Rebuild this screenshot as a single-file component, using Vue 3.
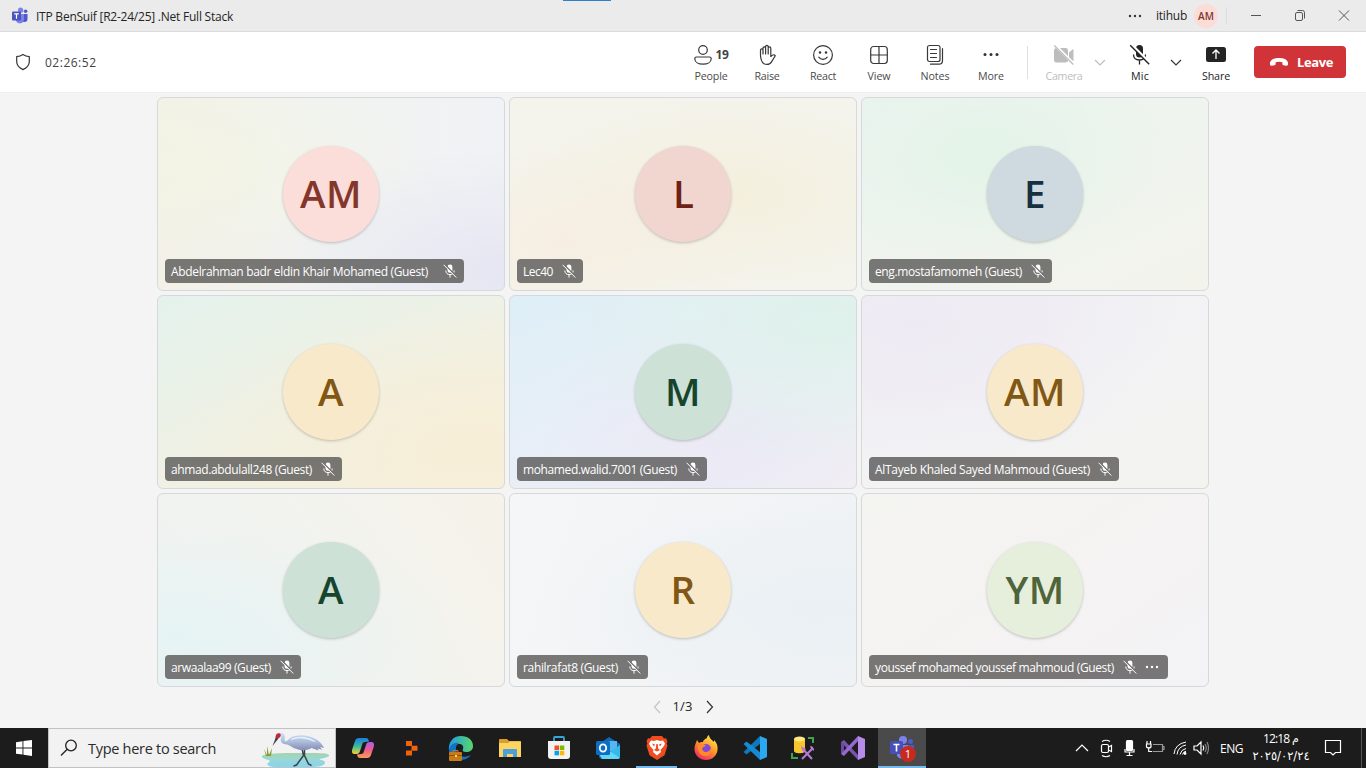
<script setup>
const vFit = {
  mounted(el, { value }) {
    const natural = el.getBoundingClientRect().width
    el.style.letterSpacing = (value - natural) / el.textContent.trim().length + 'px'
  },
}

const tiles = [
  { name: 'Abdelrahman badr eldin Khair Mohamed (Guest)', ini: 'AM', iw: 62, w: 257, pill: 299, cls: 't1' },
  { name: 'Lec40', ini: 'L', iw: 20, w: 30, pill: 66, cls: 't2' },
  { name: 'eng.mostafamomeh (Guest)', ini: 'E', iw: 22, w: 147, pill: 183, cls: 't3' },
  { name: 'ahmad.abdulall248 (Guest)', ini: 'A', iw: 26, w: 141, pill: 177, cls: 't4' },
  { name: 'mohamed.walid.7001 (Guest)', ini: 'M', iw: 36, w: 154, pill: 190, cls: 't5' },
  { name: 'AlTayeb Khaled Sayed Mahmoud (Guest)', ini: 'AM', iw: 62, w: 215, pill: 250, cls: 't6' },
  { name: 'arwaalaa99 (Guest)', ini: 'A', iw: 26, w: 100, pill: 136, cls: 't7' },
  { name: 'rahilrafat8 (Guest)', ini: 'R', iw: 25, w: 95, pill: 131, cls: 't8' },
  { name: 'youssef mohamed youssef mahmoud (Guest)', ini: 'YM', iw: 59, w: 239, pill: 299, cls: 't9', more: true },
]
</script>

<template>
  <div class="screen">
    <header class="titlebar">
      <svg class="logo" width="18" height="18" viewBox="0 0 18 18">
        <circle cx="14.6" cy="4.2" r="1.8" fill="#5059c9" /><circle cx="9.6" cy="3.2" r="2.6" fill="#7b83eb" />
        <path d="M12 7h4.5v5a3 3 0 0 1-3 3H12z" fill="#5059c9" /><path d="M5 7h8v5.5a4.2 4.2 0 0 1-8 1.5z" fill="#7b83eb" />
        <rect x="1" y="4.5" width="9" height="9" rx="1" fill="#4b53bc" /><path d="M3.2 6.8h4.6M5.5 6.8v5" stroke="#fff" stroke-width="1.2" />
      </svg>
      <span class="win-title"><span v-fit="197">ITP BenSuif [R2-24/25] .Net Full Stack</span></span>
      <div class="win-right">
        <svg class="tdots" width="14" height="4" viewBox="0 0 14 4"><circle cx="2" cy="2" r="1.2" /><circle cx="7" cy="2" r="1.2" /><circle cx="12" cy="2" r="1.2" /></svg>
        <span class="acct"><span v-fit="31">itihub</span></span>
        <span class="mini-av">AM</span>
        <i class="tsep"></i>
        <svg class="wbtns" width="110" height="16" viewBox="0 0 110 16" fill="none" stroke="#555">
          <path d="M5 7.5h10M93 2.5l10 10M103 2.5l-10 10" /><rect x="49.5" y="4.5" width="7" height="8" rx="1.5" /><path d="M51.5 2.5h5a2 2 0 0 1 2 2v6" />
        </svg>
      </div>
    </header>

    <div class="toolbar">
      <svg class="shield" width="18" height="18" viewBox="0 0 18 18" fill="none" stroke="#333" stroke-width="1.2" stroke-linejoin="round"><path d="M9 1.5c2 1.4 4 2 6.300 2.100v5c0 3.800-2.400 6.300-6.300 8-3.900-1.700-6.300-4.200-6.300-8v-5C5 3.500 7 2.900 9 1.500z" /></svg>
      <span class="timer"><span v-fit="51.5">02:26:52</span></span>
      <div class="tools">
        <div class="tool">
          <div class="ic people">
            <svg width="20" height="22" viewBox="0 0 20 22" class="ln"><circle cx="10" cy="6" r="4.3" /><path d="M3.500 13h13a1.700 1.700 0 0 1 1.700 1.700c0 3.500-3.700 5.500-8.200 5.500s-8.200-2-8.200-5.500A1.700 1.700 0 0 1 3.500 13z" /></svg>
            <b>19</b>
          </div><em><span v-fit="33">People</span></em>
        </div>
        <div class="tool">
          <div class="ic"><svg width="20" height="22" viewBox="0 0 20 22" class="ln"><path d="M3.500 11V6.200a1.200 1.200 0 0 1 2.500 0V4.200a1.300 1.300 0 0 1 2.600 0V2.700a1.300 1.300 0 0 1 2.600 0v1.500a1.300 1.300 0 0 1 2.600 0v8.300l1.800-1.400c.8-.6 2.200-.4 2.700.6l-3.800 6.200c-1 1.800-2.200 2.500-4.500 2.500-3.600 0-5-1.800-5.800-4.800-.4-1.600-.7-3-.7-4.600zM6 6v4M8.600 4.200V10M11.200 4.200V10" /></svg></div><em><span v-fit="25">Raise</span></em>
        </div>
        <div class="tool">
          <div class="ic"><svg width="22" height="22" viewBox="0 0 22 22" class="ln"><circle cx="11" cy="11" r="9.4" /><circle cx="8" cy="8.5" r="1.2" fill="#333" stroke="none" /><circle cx="14" cy="8.5" r="1.2" fill="#333" stroke="none" /><path d="M6.800 13.200c2 2.800 6.400 2.800 8.400 0" /></svg></div><em><span v-fit="26">React</span></em>
        </div>
        <div class="tool">
          <div class="ic"><svg width="20" height="22" viewBox="0 0 20 22" class="ln"><rect x="1.7" y="2.5" width="16.6" height="17" rx="3" /><path d="M10 2.500v17M1.700 11h16.600" /></svg></div><em><span v-fit="23">View</span></em>
        </div>
        <div class="tool">
          <div class="ic"><svg width="20" height="22" viewBox="0 0 20 22" class="ln"><rect x="2.5" y="1.5" width="12.5" height="16" rx="2" /><path d="M5.500 5.500h6M5.500 9.500h6M5.500 13.500h6M17.500 4.500v12c0 2.500-1 3.700-3.500 3.700H5.500" /></svg></div><em><span v-fit="29">Notes</span></em>
        </div>
        <div class="tool">
          <div class="ic"><svg width="20" height="22" viewBox="0 0 20 22" fill="#333"><circle cx="4" cy="10.5" r="1.5" /><circle cx="10" cy="10.5" r="1.5" /><circle cx="16" cy="10.5" r="1.5" /></svg></div><em><span v-fit="26">More</span></em>
        </div>
        <i class="vsep"></i>
        <div class="tool off">
          <div class="ic"><svg width="24" height="22" viewBox="0 0 24 22"><rect x="2" y="4" width="14" height="14.5" rx="2.5" fill="#bdbdbd" /><path d="M17 8.500l3.500-3c.6-.5 1-.2 1 .4v10.500c0 .7-.5.9-1 .4l-3.500-3z" fill="#bdbdbd" /><path d="M2.800 1l19 19" stroke="#fff" stroke-width="3" /><path d="M2.300 1.500l19 19" stroke="#bdbdbd" stroke-width="1.3" /></svg></div><em><span v-fit="37">Camera</span></em>
        </div>
        <svg class="chev off" width="16" height="10" viewBox="0 0 16 10"><path d="M3 2l5 5 5-5" /></svg>
        <div class="tool dark">
          <div class="ic"><svg width="22" height="22" viewBox="0 0 22 22"><rect x="7" y="1" width="7" height="12.5" rx="3.5" fill="#242424" /><path d="M4.500 10.500c0 3.500 2.500 5.500 6 5.500s6-2 6-5.500M10.500 16v4.500" fill="none" stroke="#242424" stroke-width="1.3" /><path d="M2.500.5l19 19" stroke="#fff" stroke-width="2.6" /><path d="M1.200 1.200l19 19" stroke="#242424" stroke-width="1.4" /></svg></div><em><span v-fit="18">Mic</span></em>
        </div>
        <svg class="chev" width="16" height="10" viewBox="0 0 16 10"><path d="M3 2l5 5 5-5" /></svg>
        <div class="tool dark">
          <div class="ic"><svg width="22" height="22" viewBox="0 0 22 22"><rect x="1" y="3" width="20" height="15" rx="2.5" fill="#242424" /><path d="M11 15v-9M7.500 9.500L11 6 14.500 9.500" fill="none" stroke="#fff" stroke-width="1.3" /></svg></div><em><span v-fit="28">Share</span></em>
        </div>
        <button class="leave">
          <svg width="20" height="10" viewBox="0 0 20 10"><path d="M10 1c4.500 0 7.700 1.600 8.700 3.700.5 1 .5 2.300.1 3.300-.2.6-.8.9-1.400.8l-3-.5c-.6-.1-1-.6-1-1.200V5.300C12.400 4.900 11.200 4.700 10 4.700s-2.400.2-3.400.6v1.800c0 .6-.4 1.100-1 1.200l-3 .5c-.6.1-1.200-.2-1.400-.8-.4-1-.4-2.300.1-3.300C2.300 2.600 5.500 1 10 1z" fill="#fff" /></svg>
          <span v-fit="36">Leave</span>
        </button>
      </div>
    </div>

    <main class="stage">
      <div class="grid">
        <section v-for="t in tiles" :key="t.name" class="tile" :class="t.cls">
          <div class="avatar"><span v-fit="t.iw">{{ t.ini }}</span></div>
          <div class="pill" :style="{ width: t.pill + 'px' }">
            <span class="name"><span v-fit="t.w">{{ t.name }}</span></span>
            <svg class="mute" width="14" height="14" viewBox="0 0 14 14"><rect x="4.6" y=".5" width="4.8" height="8.3" rx="2.4" fill="#fff" /><path d="M2.800 6.500c0 2.700 1.700 4.100 4.200 4.100s4.200-1.400 4.200-4.100M7 10.600v3" fill="none" stroke="#fff" /><path d="M1.500.3L14 12.800" stroke="#777674" stroke-width="1.5" /><path d="M.6.8l12.700 12.700" stroke="#fff" /></svg>
            <svg v-if="t.more" class="pdots" width="14" height="4" viewBox="0 0 14 4" fill="#fff"><circle cx="2" cy="2" r="1.2" /><circle cx="7" cy="2" r="1.2" /><circle cx="12" cy="2" r="1.2" /></svg>
          </div>
        </section>
      </div>
      <nav class="pager">
        <svg class="off" width="8" height="14" viewBox="0 0 8 14"><path d="M7 1L1.500 7 7 13" /></svg>
        <span class="pg"><span v-fit="20">1/3</span></span>
        <svg width="8" height="14" viewBox="0 0 8 14"><path d="M1 1l5.500 6L1 13" /></svg>
      </nav>
    </main>

    <footer class="taskbar">
      <div class="start"><svg width="16" height="16" viewBox="0 0 16 16" fill="#fff"><path d="M0 2.300L6.500 1.300V7.500H0zM7.400 1.100L16 0v7.500H7.400zM0 8.400h6.500v6.200L0 13.700zM7.400 8.400H16V16l-8.600-1.200z" /></svg></div>
      <div class="search">
        <svg class="mag" width="18" height="18" viewBox="0 0 18 18" fill="none" stroke="#222" stroke-width="1.3"><circle cx="11" cy="6.5" r="5.3" /><path d="M7.200 10.300L1 16.500" /></svg>
        <span class="ph"><span v-fit="128">Type here to search</span></span>
        <svg class="crane" width="70" height="36" viewBox="0 0 70 36">
          <defs><linearGradient id="lake" x1="0" y1="0" x2="0" y2="1"><stop offset="0" stop-color="#a5d2ad" /><stop offset=".4" stop-color="#9ad7d2" /><stop offset="1" stop-color="#87d5ef" /></linearGradient><linearGradient id="bird" x1="0" y1="0" x2="0" y2="1"><stop offset="0" stop-color="#d3e3f6" /><stop offset=".5" stop-color="#adbddb" /><stop offset="1" stop-color="#8189b2" /></linearGradient></defs>
          <path d="M2 25c2-2 12-3 31-3s35-.5 36 2-7 3-9 4 6 1 5 4-7 4-14 4H16c-7 0-10-2-8-4s3-2 0-3-7-2-6-4z" fill="url(#lake)" />
          <path d="M6 25l-2-7 3 6 0-9 2 9 3-7-1 8z" fill="#8c9c35" />
          <path d="M42 17.500l1.500 7L36.500 34l-3 1M44.500 17.500v7L48.500 33l3 1.500" fill="none" stroke="#34454f" stroke-width="1.5" />
          <path d="M18.500 2.500c2-1.300 5-.8 6 1.500 1 2.300-.2 4.500.6 6.200 1.400.6 3-1.700 5-3.200 5-3.600 14-3.300 20-1.300 6.500 1.600 11.500 6 14 11.300l-4-1 2 2.800-4.500-1.300 1 2-7-2.500c-5 2.500-11 3-15.600.8-4.500-1.600-7-4.300-10.500-4.600-4.500-.3-5.500-3.400-4.500-7.200-1-1-1.500-2-2.500-3.500z" fill="url(#bird)" />
          <path d="M15.500 6c.3-3 2-4.500 4.500-3.500 1 1 1 2.600-.2 3.800L16 9.500z" fill="#c32939" /><path d="M15.800 6.500l2.400 1.300L12.500 15z" fill="#39434c" />
          <path d="M31 8.500c7-3 17-2.300 24 2" fill="none" stroke="#e9f2fd" stroke-width="1.3" />
        </svg>
      </div>
      <div class="apps">
        <div class="app"><svg width="24" height="24" viewBox="0 0 24 24">
          <defs><linearGradient id="cpa" x1="0" y1="0" x2="0" y2="1"><stop offset="0" stop-color="#1a7fe0" /><stop offset=".5" stop-color="#36b7a0" /><stop offset="1" stop-color="#f2d22d" /></linearGradient><linearGradient id="cpb" x1="0" y1="0" x2="0" y2="1"><stop offset="0" stop-color="#b05be8" /><stop offset=".5" stop-color="#ee5b8d" /><stop offset="1" stop-color="#f8a052" /></linearGradient></defs>
          <path d="M8 2h7c2 0 2.500 1.500 3 3.500l-4 .5c-2 0-2.500 1-3 3l-2 6c-.5 2-1.500 3-3.500 3H4c-3 0-3.500-2-2.700-5L4 5c.6-2 2-3 4-3z" fill="url(#cpa)" />
          <path d="M16 22H9c-2 0-2.500-1.500-3-3.500l4-.5c2 0 2.500-1 3-3l2-6c.5-2 1.500-3 3.500-3H20c3 0 3.500 2 2.700 5L20 19c-.6 2-2 3-4 3z" fill="url(#cpb)" /></svg></div>
        <div class="app"><svg width="20" height="20" viewBox="0 0 20 20"><path d="M1 1h17v18H1z" fill="#1b1c25" /><path d="M4 3h6v5H4zM9.500 7.700h6v5h-6zM4 12.500h6v5H4z" fill="#f26207" /></svg></div>
        <div class="app"><svg width="26" height="26" viewBox="0 0 26 26">
          <defs><linearGradient id="edg"><stop offset="0" stop-color="#219be0" /><stop offset="1" stop-color="#5ad66a" /></linearGradient></defs>
          <path d="M13 1c7 0 12 4 12 10 0 4-3 6-7 6-3 0-4-1-3-3 1-3-1-5-4-5-5 0-8 4-10 7C0 7 5 1 13 1z" fill="url(#edg)" /><path d="M1 15c1-5 5-8 10-7-3 2-4 5-2 9 2 5 8 6 14 3-3 4-7 5-11 5C6 25 1 21 1 15z" fill="#1472c4" />
          <rect x="1" y="17" width="13" height="9" rx="1" fill="#c77a18" /><path d="M5 17v-1.500h5V17" fill="none" stroke="#c77a18" /><path d="M1 20.500h13" stroke="#8f5209" /><path d="M7 20h2v2H7z" fill="#ffd276" /></svg></div>
        <div class="app"><svg width="24" height="22" viewBox="0 0 24 22"><path d="M1 3q0-1 1-1h7l2 2h11q1 0 1 1v6H1z" fill="#dc9e2b" /><path d="M1 6h9l2-1.500h11V20H1z" fill="#fcd462" /><path d="M5 20v-7q0-1 1-1h12q1 0 1 1v7h-4v-3H9v3z" fill="#4b9fdb" /></svg></div>
        <div class="app"><svg width="24" height="26" viewBox="0 0 24 26"><path d="M7 8V3q0-1 1-1h8q1 0 1 1v5" fill="none" stroke="#34a7d2" stroke-width="1.8" /><path d="M1 6h22v15q0 3-3 3H4q-3 0-3-3z" fill="#f2f2f2" /><path d="M7.500 10.500H12V15H7.500z" fill="#f25022" /><path d="M12.800 10.500h4.500V15h-4.500z" fill="#7fba00" /><path d="M7.500 15.800H12v4.500H7.500z" fill="#00a4ef" /><path d="M12.800 15.800h4.500v4.500h-4.500z" fill="#ffb900" /></svg></div>
        <div class="app"><svg width="26" height="26" viewBox="0 0 26 26"><path d="M4 9l10-7 11 7v12q0 3-3 3H7q-3 0-3-3z" fill="#1366b5" /><path d="M8 6h14v10H8z" fill="#55b7ec" /><path d="M25 10v11q0 3-3 3H7l8-7z" fill="#36b8ea" /><path d="M4 19l9-4 12 8q-1 1-3 1H7z" fill="#62d7f6" /><rect x="1" y="6" width="14" height="14" rx="1.5" fill="#0c6fc6" /><ellipse cx="8" cy="13" rx="3.2" ry="3.7" fill="none" stroke="#fff" stroke-width="1.8" /></svg></div>
        <div class="app run"><svg width="22" height="26" viewBox="0 0 22 26"><path d="M6 1h10l2 2.500 2-.2 1.500 3-.8 2 .8 2.500-3 9.500L11 25l-7.500-4.700-3-9.500.8-2.500-.8-2 1.500-3 2 .2z" fill="#f14b20" /><path d="M5 5.500l3 .5 3-1 3 1 3-.5 2 3-1 2.500-3.500 4 .5 2-4 3.500L7 17l.5-2L4 11 3 8.500z" fill="#fff" /><path d="M6 8.500l3 1-1 2zM16 8.500l-3 1 1 2zM10.300 9h1.400l.5 4.500 1.800 1.500-3 1.500L8 15l1.800-1.500z" fill="#f14b20" /></svg></div>
        <div class="app"><svg width="26" height="26" viewBox="0 0 26 26">
          <defs><linearGradient id="fox" x1=".8" y1="0" x2=".2" y2="1"><stop offset="0" stop-color="#fff24c" /><stop offset=".45" stop-color="#ff9a2b" /><stop offset="1" stop-color="#f32063" /></linearGradient></defs>
          <path d="M4 5l2 3c1-1 2-1 4-1 0-2 2-3 4-4 0-2 1-2 2-3 0 3 3 5 5 7l0-2c3 3 4 6 3.500 10-.7 6-5.500 10-11.500 10S1.500 20.500 1.500 14C1.500 10 3 8 4 5z" fill="url(#fox)" /><circle cx="13" cy="14" r="5" fill="#8048dc" /><path d="M5 10c3-2 4 0 8 0l-2 2c-3 0-2 4 1 5 4 0 5-2 6-4 1 5-2 8-6 8-5 0-8-5-7-11z" fill="#ff8a27" /></svg></div>
        <div class="app"><svg width="26" height="26" viewBox="0 0 26 26"><path d="M18 1l3 5.500L4.500 19.500 1.500 17z" fill="#0d78bd" /><path d="M4.500 6.500L21 19.500 18 25 1.500 9z" fill="#168bd2" /><path d="M18 1l7 3v18l-7 3z" fill="#2ba9ef" /></svg></div>
        <div class="app"><svg width="26" height="26" viewBox="0 0 26 26"><path d="M3 4v12c0 3 11 3 11 0V4z" fill="#f7c62e" /><ellipse cx="8.5" cy="4" rx="5.5" ry="2.5" fill="#ffe784" /><path d="M17 3h5v5M1 18v5h6" fill="none" stroke="#3fa353" stroke-width="2" /><path d="M11 13l10 11M22 13L11 24" stroke="#b77bd3" stroke-width="2" /><path d="M10 11l5 3-3 3zM19 11q4 0 4 5l-3-2z" fill="#b77bd3" /></svg></div>
        <div class="app"><svg width="26" height="26" viewBox="0 0 26 26"><path d="M1 7l3-2 15 16-1 4z" fill="#7855ad" /><path d="M1 7l3 2v8l-3 2z" fill="#6b4aa2" /><path d="M1 19l3 2L19 5l-1-4z" fill="#9569d1" /><path d="M18 1l7 3v18l-7 3z" fill="#b68be9" /></svg></div>
        <div class="app active"><svg width="26" height="26" viewBox="0 0 26 26"><circle cx="14" cy="5" r="4" fill="#7b83eb" /><circle cx="21.5" cy="6.5" r="2.5" fill="#5059c9" /><path d="M8 10h11v8a6 6 0 0 1-11 3z" fill="#7b83eb" /><path d="M19 10h6v6q-1 4-6 4z" fill="#5059c9" /><rect x="1" y="6" width="13" height="13" rx="1.5" fill="#4650b8" /><path d="M4.500 9.500h6M7.500 9.500v7" stroke="#fff" stroke-width="1.6" /></svg><span class="count">1</span></div>
      </div>
      <div class="tray">
        <svg class="glyphs" width="136" height="24" viewBox="0 0 136 24" fill="none" stroke="#fff" stroke-width="1.2">
          <path d="M2 15l6-6 6 6" />
          <rect x="27.5" y="8.5" width="7" height="8" rx="1.5" /><path d="M34.500 11l3-1.500v6l-3-1.500M28 5.500q4-2.500 8 0M28 19.500q4 2.500 8 0" />
          <rect x="52.5" y="4.5" width="6" height="10" rx="1" fill="#fff" /><path d="M51 13v3h9v-3M55.500 16v3M52.500 19.500h6" />
          <path d="M79 8.500h9.500v7H79M88.500 10.500H90v3h-1.500" stroke="#999" /><path d="M73 5v3M76.500 5v3M72.500 8h4.500v3q-2.200 2-4.500 0zM74.700 12v3.500h3.500" />
          <path d="M100 18q1-10 12-12M103 18.500q1-8 9-9.500M106 18.500q1-5 6-6M108.500 18.500q1-3 3.500-3.300" stroke-width="1" /><circle cx="111" cy="17.5" r="1.4" fill="#fff" stroke="none" />
          <path d="M120 10h3l4-4v12l-4-4h-3zM129 9.500q1.500 2.500 0 5" /><path d="M131 8q2.500 4 0 8M133 6q3 6 0 12" stroke="#888" />
        </svg>
        <span class="lang"><span v-fit="23">ENG</span></span>
        <div class="clock"><div class="time"><span v-fit="26">12:18</span><span class="pm">م</span></div><div class="date"><span v-fit="52">٢٠٢٥/٠٢/٢٤</span></div></div>
        <svg class="note" width="18" height="18" viewBox="0 0 18 18" fill="none" stroke="#fff" stroke-width="1.2"><path d="M1.500 1.500h15v12h-5L9 16l-2.500-2.500h-5z" /></svg>
        <i class="peek"></i>
      </div>
    </footer>
    <div class="handle"></div>
  </div>
</template>

<style>
body { margin: 0; background: #f5f5f5; overflow: hidden; }
</style>

<style scoped>
* { box-sizing: border-box; }
.screen { position: relative; width: 1366px; height: 768px; display: flex; flex-direction: column; font-family: "Open Sans", "Noto Sans", sans-serif; color: #242424; background: #f4f4f4; white-space: nowrap; overflow: hidden; }
.handle { position: absolute; left: 563px; top: 0; width: 48px; height: 1px; background: #2f7fc9; }
svg { display: block; flex: none; }
.titlebar { height: 32px; flex: none; display: flex; align-items: center; background: #ebebeb; border-bottom: 1px solid #dcdcdc; padding-left: 11px; font-size: 12px; }
.win-title { margin-left: 7px; width: 220px; line-height: 16px; padding-top: 2px; }
.win-right { margin-left: auto; display: flex; align-items: center; width: 238px; }
.tdots { fill: #333; }
.acct { margin-left: 14px; width: 31px; margin-top: -1px; }
.mini-av { width: 24px; height: 24px; margin-left: 7px; border-radius: 50%; background: #fbdcd7; color: #82392c; font-weight: 600; font-size: 10px; line-height: 24px; text-align: center; }
.tsep { width: 1px; height: 18px; background: #ddd; margin-left: 8px; }
.wbtns { margin-left: 19px; margin-top: 1px; }
.toolbar { height: 61px; flex: none; display: flex; align-items: center; background: #fff; border-bottom: 1px solid #f0f0f0; padding-left: 14px; }
.shield { margin-top: -1px; }
.timer { margin-left: 13px; font-size: 12px; color: #424242; }
.tools { margin-left: auto; width: 683px; height: 60px; display: flex; align-items: center; }
.tool { width: 56px; flex: none; display: flex; flex-direction: column; align-items: center; padding-top: 1px; color: #4a4a4a; }
.tool.dark { color: #242424; }
.tool.off { color: #bdbdbd; }
.ic { height: 22px; display: flex; align-items: center; justify-content: center; position: relative; top: 1px; }
.people { gap: 2px; }
.people b { font-size: 12px; font-weight: 700; letter-spacing: -.3px; color: #424242; }
.ln { fill: none; stroke: #383838; stroke-width: 1.2; stroke-linejoin: round; stroke-linecap: round; }
em { font-style: normal; font-size: 10.7px; line-height: 14px; margin-top: 4px; }
.vsep { width: 1px; height: 33px; background: #e0e0e0; margin: 0 8px; flex: none; }
.chev { fill: none; stroke: #333; stroke-width: 1.1; margin-right: 4px; position: relative; top: 1px; }
.chev.off { stroke: #bdbdbd; }
.leave { margin-left: 10px; width: 92px; height: 32px; border: 0; border-radius: 4px; background: #d13438; color: #fff; font: 700 13px "Open Sans", sans-serif; display: flex; align-items: center; gap: 8px; padding: 0 0 0 15px; }
.stage { flex: 1; display: flex; flex-direction: column; align-items: center; padding-top: 4px; background: #f4f4f4; }
.grid { display: grid; grid-template-columns: repeat(3, 348px); grid-auto-rows: 194px; gap: 4px; }
.tile { border: 1px solid #d6d9da; border-radius: 6px; position: relative; display: flex; align-items: center; justify-content: center; }
.avatar { width: 96px; height: 96px; border-radius: 50%; display: flex; align-items: center; justify-content: center; font-size: 38.5px; font-weight: 600; line-height: 94px; padding-bottom: 2px; box-shadow: 0 1px 3px rgba(0, 0, 0, .22); }
.pill { position: absolute; left: 7px; bottom: 7px; height: 24px; border-radius: 4px; background: rgba(80, 79, 78, .76); color: #fff; display: flex; align-items: center; padding: 0 7px 0 6px; font-size: 12px; font-weight: 500; line-height: 24px; }
.name { flex: 1; padding-top: 2px; }
.pdots { margin: 0 2px 0 8px; }
.t1 { background: radial-gradient(ellipse at 100% 90%, #e6e6f3, rgba(230, 230, 243, 0) 50%), radial-gradient(ellipse at 0 35%, #f3f4e5, rgba(243, 244, 229, 0) 55%), linear-gradient(90deg, #f3f1e7, #f1f3f0 45%, #f1f2f5); }
.t1 .avatar { background: #fbded9; color: #83372b; }
.t2 { background: radial-gradient(ellipse at 15% 75%, #f6eee2, rgba(246, 238, 226, 0) 50%), radial-gradient(ellipse at 62% 50%, #f4efdc, rgba(244, 239, 220, 0) 75%), #f4f4ed; }
.t2 .avatar { background: #f1d5cf; color: #6e2114; }
.t3 { background: radial-gradient(ellipse at 36% 30%, #e3f4e8, rgba(227, 244, 232, 0) 60%), linear-gradient(155deg, #ebf3f0, #f0f4ee 55%, #f3f3ec); }
.t3 .avatar { background: #ced9e0; color: #17303f; }
.t4 { background: radial-gradient(ellipse at 90% 80%, #f7eed7, rgba(247, 238, 215, 0) 65%), linear-gradient(155deg, #e4f2ec, #f0f1e4 55%, #f5f1df); }
.t4 .avatar { background: #f8e9ca; color: #805714; }
.t5 { background: radial-gradient(ellipse at 90% 15%, #dff2eb, rgba(223, 242, 235, 0) 60%), radial-gradient(ellipse at 60% 75%, #ebe9f5, rgba(235, 233, 245, 0) 60%), linear-gradient(155deg, #deeff7, #e9eef7 55%, #f2eef3); }
.t5 .avatar { background: #cee1d6; color: #17442c; }
.t6 { background: radial-gradient(ellipse at 15% 15%, #edeaf3, rgba(237, 234, 243, 0) 65%), linear-gradient(160deg, #f1eff4, #f3f3f4 55%, #f3f3f0); }
.t6 .avatar { background: #f8e9ca; color: #805714; }
.t7 { background: radial-gradient(ellipse at 5% 75%, #e6f3f4, rgba(230, 243, 244, 0) 60%), linear-gradient(235deg, #f6f2e9, #f2f3ef 50%, #eff3f1); }
.t7 .avatar { background: #cee1d6; color: #17442c; }
.t8 { background: radial-gradient(ellipse at 90% 60%, #eaf0f4, rgba(234, 240, 244, 0) 65%), linear-gradient(110deg, #f5f6f7, #eff2f5); }
.t8 .avatar { background: #f8e9ca; color: #805714; }
.t9 { background: linear-gradient(145deg, #f4f4f1, #f5f3f2 45%, #f3f2f5); }
.t9 .avatar { background: #e6eedc; color: #4f643a; }
.pager { height: 40px; display: flex; align-items: center; gap: 12px; font-size: 13px; }
.pg { width: 21px; margin-top: -2px; }
.pager svg { fill: none; stroke: #333; stroke-width: 1.2; }
.pager svg.off { stroke: #c4c4c4; }
.taskbar { height: 40px; flex: none; display: flex; background: #1c1c1c; color: #fff; }
.start { width: 48px; display: flex; align-items: center; justify-content: center; }
.search { width: 288px; background: #f2f2f2; border: 1px solid #c2c2c2; display: flex; align-items: center; padding-left: 11px; color: #2b2b2b; }
.ph { margin-left: 10px; width: 172px; font-size: 14.5px; }
.crane { margin-top: 2px; }
.apps { display: flex; margin-left: 2px; }
.app { width: 49px; height: 40px; flex: none; display: flex; align-items: center; justify-content: center; position: relative; }
.run::after { content: ""; position: absolute; left: 4px; right: 4px; bottom: 0; height: 2px; background: #76b9ed; }
.active { width: 48px; margin-left: 1px; background: #4a4a4a; border-bottom: 2px solid #76b9ed; padding-top: 2px; }
.count { position: absolute; left: 22px; top: 18px; width: 16px; height: 16px; border-radius: 50%; background: #c72b20; font-size: 11px; line-height: 16px; text-align: center; }
.tray { margin-left: auto; width: 292px; display: flex; align-items: center; }
.lang { width: 24px; margin-left: 10px; font-size: 12px; }
.clock { width: 58px; margin-left: 8px; font-size: 12px; line-height: 17px; display: flex; flex-direction: column; align-items: center; }
.time { direction: ltr; height: 17px; line-height: 16px; display: flex; gap: 3px; }
.pm { font-family: "DejaVu Sans", sans-serif; font-size: 11px; }
.date { font-family: "DejaVu Sans", sans-serif; font-size: 11.5px; line-height: 17px; direction: ltr; }
.note { margin-left: 14px; }
.peek { width: 1px; height: 40px; margin-left: 19px; background: #555; }
</style>
